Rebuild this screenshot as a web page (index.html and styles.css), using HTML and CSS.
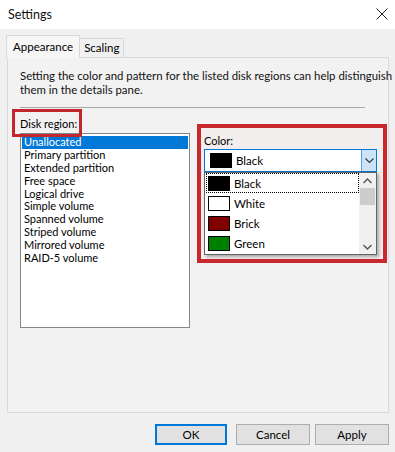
FILE: index.html
```html
<!DOCTYPE html>
<html>
<head>
<meta charset="utf-8">
<link rel="stylesheet" href="styles.css">
</head>
<body>
<div class="window">
  <div class="titlebar">
    <span class="title">Settings</span>
    <svg class="close" width="12" height="12" viewBox="0 0 12 12"><path d="M0.5 0.5 L11.5 11.5 M11.5 0.5 L0.5 11.5" stroke="#222" stroke-width="1" fill="none"/></svg>
  </div>
  <div class="body">
    <div class="tabs">
      <div class="tab active">Appearance</div>
      <div class="tab">Scaling</div>
    </div>
    <div class="panel">
      <p class="desc">Setting the color and pattern for the listed disk regions can help distinguish<br>them in the details pane.</p>
      <div class="sep"></div>
      <div class="row">
        <div class="left">
          <div class="label">Disk region:</div>
          <div class="mark mark-label"></div>
          <ul class="list">
            <li class="sel">Unallocated</li>
            <li>Primary partition</li>
            <li>Extended partition</li>
            <li>Free space</li>
            <li>Logical drive</li>
            <li>Simple volume</li>
            <li>Spanned volume</li>
            <li>Striped volume</li>
            <li>Mirrored volume</li>
            <li>RAID-5 volume</li>
          </ul>
        </div>
        <div class="right">
          <div class="colorbox">
            <div class="clabel">Color:</div>
            <div class="combo">
              <div class="combo-value"><span class="sw sw-black"></span><span>Black</span></div>
              <div class="combo-btn"><svg width="9" height="6" viewBox="0 0 9 6"><path d="M0.5 0.5 L4.5 4.5 L8.5 0.5" stroke="#333" stroke-width="1.1" fill="none"/></svg></div>
              <div class="drop">
                <ul class="opts">
                  <li class="focus"><span class="sw sw-black"></span>Black</li>
                  <li><span class="sw sw-white"></span>White</li>
                  <li><span class="sw sw-brick"></span>Brick</li>
                  <li><span class="sw sw-green"></span>Green</li>
                </ul>
                <div class="sbar">
                  <svg class="arr" width="9" height="6" viewBox="0 0 9 6"><path d="M0.5 5 L4.5 1 L8.5 5" stroke="#555" stroke-width="1.4" fill="none"/></svg>
                  <div class="thumb"></div>
                  <div class="track"></div>
                  <svg class="arr" width="9" height="6" viewBox="0 0 9 6"><path d="M0.5 1 L4.5 5 L8.5 1" stroke="#555" stroke-width="1.4" fill="none"/></svg>
                </div>
              </div>
            </div>
          </div>
        </div>
      </div>
    </div>
    <div class="buttons">
      <button class="btn default">OK</button>
      <button class="btn">Cancel</button>
      <button class="btn">Apply</button>
    </div>
  </div>
</div>
</body>
</html>
```
FILE: styles.css
```css
* { box-sizing: border-box; }
html, body { margin: 0; padding: 0; }
body {
  width: 395px;
  height: 452px;
  background: #f0f0f0;
  font-family: Lato, "Noto Sans", sans-serif;
  font-size: 11px;
  color: #000;
  overflow: hidden;
}
.window { width: 395px; height: 452px; display: flex; flex-direction: column; }
.titlebar {
  height: 29px;
  background: #fff;
  display: flex;
  align-items: center;
  justify-content: space-between;
  padding: 0 8px 1px 8px;
}
.title { font-size: 12.5px; color: #111; }
.close { margin-right: -1px; }
.body { flex: 1; position: relative; }
.tabs { display: flex; align-items: flex-end; margin: 6px 0 0 6px; height: 22px; }
.tab {
  height: 19px;
  padding: 0 4px 0 4px;
  border: 1px solid #d9d9d9;
  border-bottom: none;
  background: #f0f0f0;
  line-height: 18px;
  margin-left: -1px;
  font-size: 11.5px;
}
.tab.active {
  height: 23px;
  margin-bottom: -1px;
  background: #f6f6f6;
  padding: 2px 6px 0 6px;
  margin-left: 0;
  position: relative;
  z-index: 1;
}
.panel {
  margin-left: 7px;
  width: 382px;
  height: 356px;
  border: 1px solid #d9d9d9;
  background: #f2f2f2;
  padding: 11px 0 0 12px;
}
.desc { margin: 0; line-height: 14px; white-space: nowrap; color: #111; font-size: 11.4px; }
.sep { width: 345px; height: 1px; background: #a8a8a8; margin-top: 10px; }
.row { display: flex; gap: 7px; }
.left { position: relative; width: 170px; }
.label { padding-top: 9px; line-height: 14px; height: 25px; }
.mark { position: absolute; border: 3px solid #c1272d; z-index: 2; }
.mark-label { left: -8px; top: 1px; width: 70px; height: 28px; }
.list {
  list-style: none;
  margin: 0;
  padding: 2px 1px 0 1px;
  width: 170px;
  height: 195px;
  background: #fff;
  border: 1px solid #828790;
}
.list li { line-height: 12.9px; height: 12.9px; padding-left: 2px; white-space: nowrap; overflow: hidden; }
.list li.sel { background: #0078d7; color: #fff; }
.right { padding-top: 16px; }
.colorbox {
  width: 190px;
  height: 139px;
  border: 4px solid #c8282e;
  padding: 6px 0 0 3px;
  background: #f3eeee;
}
.clabel { line-height: 14px; margin-bottom: 1px; }
.combo {
  position: relative;
  width: 173px;
  height: 23px;
  border: 1px solid #0078d7;
  background: #fff;
  display: flex;
}
.combo-value { flex: 1; display: flex; align-items: center; padding-left: 5px; gap: 4px; font-size: 11.5px; }
.combo-btn {
  width: 15px;
  background: #cce4f7;
  border-left: 1px solid #569de5;
  display: flex;
  align-items: center;
  justify-content: center;
}
.sw { display: inline-block; width: 22px; height: 15px; border: 1px solid #000; flex: none; }
.sw-black { background: #000; }
.sw-white { background: #fff; }
.sw-brick { background: #800000; }
.sw-green { background: #008000; }
.drop {
  position: absolute;
  left: -1px;
  top: 22px;
  width: 173px;
  height: 83px;
  border: 1px solid #646464;
  background: #fff;
  display: flex;
  box-shadow: 2px 2px 3px rgba(0,0,0,0.3);
  z-index: 3;
}
.opts { list-style: none; margin: 0; padding: 0 0 0 1px; flex: 1; }
.opts li { height: 20px; display: flex; align-items: center; gap: 4px; padding-left: 1px; border: 1px solid transparent; font-size: 11.5px; }
.opts li.focus { border: 1px dotted #000; }
.sbar {
  width: 17px;
  background: #f0f0f0;
  display: flex;
  flex-direction: column;
  align-items: center;
}
.arr { margin: 5px 0 4px; }
.thumb { width: 15px; height: 17px; background: #cdcdcd; }
.track { flex: 1; }
.buttons {
  position: absolute;
  right: 6px;
  top: 395px;
  display: flex;
  gap: 5px;
}
.btn {
  font-family: inherit;
  font-size: 11.5px;
  width: 74px;
  height: 21px;
  background: #e1e1e1;
  border: 1px solid #adadad;
  padding: 0;
  color: #000;
}
.btn.default { border: 2px solid #0078d7; width: 72px; margin-right: 4px; }
```
